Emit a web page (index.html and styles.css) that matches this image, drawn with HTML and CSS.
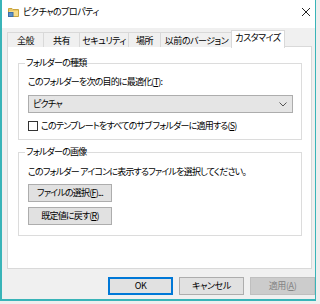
FILE: index.html
```html
<!DOCTYPE html>
<html lang="ja">
<head>
<meta charset="utf-8">
<link rel="stylesheet" href="styles.css">
</head>
<body>
<div class="window">
  <div class="titlebar">
    <svg class="appicon" width="11" height="10" viewBox="0 0 11 10">
      <path d="M0.5 1.5h3.5l1 1h5.5v7h-10z" fill="#e9c867" stroke="#c9a53f" stroke-width="1"/>
      <rect x="1" y="4" width="9" height="5" fill="#f6dc8a"/>
      <rect x="0.5" y="5.5" width="4.5" height="4" fill="#5c8fc7" stroke="#3d6fa8" stroke-width="1"/>
    </svg>
    <span class="title">ピクチャのプロパティ</span>
    <svg class="close" width="10" height="10" viewBox="0 0 10 10">
      <path d="M1 1L9 9M9 1L1 9" stroke="#222" stroke-width="1"/>
    </svg>
  </div>
  <div class="tabs">
    <div class="tab t1">全般</div>
    <div class="tab t2">共有</div>
    <div class="tab t3">セキュリティ</div>
    <div class="tab t4">場所</div>
    <div class="tab t5">以前のバージョン</div>
    <div class="tab active">カスタマイズ</div>
  </div>
  <div class="panel">
    <div class="group g1">
      <span class="legend">フォルダーの種類</span>
      <div class="text">このフォルダーを次の目的に最適化(<u>T</u>):</div>
      <div class="combo">
        <span>ピクチャ</span>
        <svg class="chev" width="8" height="5" viewBox="0 0 8 5"><path d="M0.5 0.5L4 4L7.5 0.5" fill="none" stroke="#555" stroke-width="1"/></svg>
      </div>
      <div class="check"><span class="box"></span><span>このテンプレートをすべてのサブ フォルダーに適用する(<u>S</u>)</span></div>
    </div>
    <div class="group g2">
      <span class="legend">フォルダーの画像</span>
      <div class="text">このフォルダー アイコンに表示するファイルを選択してください。</div>
      <div class="btn wide b1">ファイルの選択(<u>F</u>)...</div>
      <div class="btn wide b2">既定値に戻す(<u>R</u>)</div>
    </div>
  </div>
  <div class="footer">
    <div class="btn dlg default">OK</div>
    <div class="btn dlg">キャンセル</div>
    <div class="btn dlg disabled">適用(<u>A</u>)</div>
  </div>
</div>
</body>
</html>
```

FILE: styles.css
```css
* { box-sizing: border-box; }
html, body {
  margin: 0;
  padding: 0;
  background: #eeeeee;
}
body {
  width: 320px;
  height: 304px;
  overflow: hidden;
  font-family: "Noto Sans CJK JP", "Noto Sans", sans-serif;
  font-size: 9px;
  font-feature-settings: "palt";
  letter-spacing: -0.8px;
  color: #000;
}
u { text-decoration: underline; text-underline-offset: 1px; }

.window {
  width: 316px;
  height: 301px;
  border-left: 2px solid #39b4b8;
  border-right: 1px solid #39b4b8;
  border-bottom: 2px solid #39b4b8;
  background: #f0f0f0;
  display: flex;
  flex-direction: column;
}

.titlebar {
  height: 28px;
  flex: none;
  background: #fff;
  display: flex;
  align-items: center;
  padding: 0 4px 4px 6px;
}
.appicon { flex: none; }
.title { margin-left: 4px; line-height: 14px; letter-spacing: -0.5px; }
.close { margin-left: auto; }

.tabs {
  display: flex;
  align-items: flex-end;
  padding: 2px 0 0 5px;
  height: 19px;
  flex: none;
  position: relative;
  z-index: 2;
}
.tab {
  height: 15px;
  line-height: 14px;
  padding: 1px 0 0;
  text-align: center;
  border: 1px solid #d9d9d9;
  border-bottom: none;
  border-right: none;
  background: #f0f0f0;
  white-space: nowrap;
  letter-spacing: -0.5px;
}
.t1 { width: 36px; }
.t2 { width: 36px; }
.t3 { width: 49px; }
.t4 { width: 32px; }
.t5 { width: 72px; }
.tab.active {
  width: 54px;
  height: 18px;
  margin-left: -1px;
  padding-top: 0;
  line-height: 13px;
  background: #fff;
  border: 1px solid #d9d9d9;
  border-bottom: none;
  margin-bottom: -1px;
}

.panel {
  flex: none;
  height: 223px;
  margin: -1px 3px 0 5px;
  background: #fff;
  border: 1px solid #d9d9d9;
  padding: 0 9px 0 10px;
  position: relative;
  z-index: 1;
}

.group {
  position: relative;
  border: 1px solid #dcdcdc;
}
.legend {
  position: absolute;
  top: -8px;
  left: 6px;
  padding: 0 1px;
  background: #fff;
  line-height: 14px;
}
.text { line-height: 14px; white-space: nowrap; }

.g1 {
  margin-top: 16px;
  height: 77px;
  padding: 11px 8px 0 9px;
}
.combo {
  margin-top: 6px;
  height: 18px;
  background: #e5e5e5;
  border: 1px solid #adadad;
  display: flex;
  align-items: center;
  padding: 0 5px 0 4px;
  line-height: 14px;
}
.chev { margin-left: auto; }
.check {
  margin-top: 6px;
  display: flex;
  align-items: center;
  line-height: 14px;
  white-space: nowrap;
}
.box {
  width: 10px;
  height: 10px;
  border: 1px solid #333;
  background: #fff;
  margin-right: 3px;
  flex: none;
}

.g2 {
  margin-top: 12px;
  height: 84px;
  padding: 12px 8px 0 9px;
}

.btn {
  height: 18px;
  line-height: 16px;
  text-align: center;
  background: #e1e1e1;
  border: 1px solid #adadad;
  white-space: nowrap;
}
.wide { width: 84px; }
.b1 { margin-top: 5px; }
.b2 { margin-top: 5px; }

.footer {
  display: flex;
  justify-content: flex-end;
  gap: 6px;
  margin-top: 8px;
}
.dlg { width: 65px; letter-spacing: -0.4px; }
.default { border: 1px solid #0078d7; box-shadow: inset 0 0 0 1px #0078d7; }
.disabled { background: #cccccc; border-color: #bfbfbf; color: #838383; }
```
